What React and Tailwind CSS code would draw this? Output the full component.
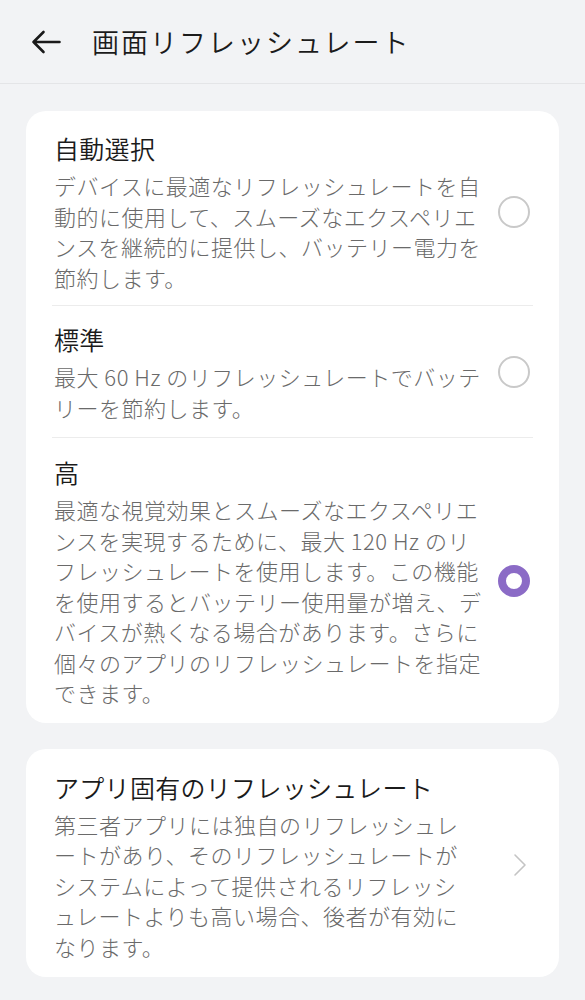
import React from 'react';

const options = [
  {
    title: '自動選択',
    lines: [
      'デバイスに最適なリフレッシュレートを自',
      '動的に使用して、スムーズなエクスペリエ',
      'ンスを継続的に提供し、バッテリー電力を',
      '節約します。',
    ],
    pad: 'pt-[20px] pb-[13px]',
    checked: false,
  },
  {
    title: '標準',
    lines: ['最大 60 Hz のリフレッシュレートでバッテ', 'リーを節約します。'],
    pad: 'pt-[16px] pb-[15px]',
    checked: false,
  },
  {
    title: '高',
    lines: [
      '最適な視覚効果とスムーズなエクスペリエ',
      'ンスを実現するために、最大 120 Hz のリ',
      'フレッシュレートを使用します。この機能',
      'を使用するとバッテリー使用量が増え、デ',
      'バイスが熱くなる場合があります。さらに',
      '個々のアプリのリフレッシュレートを指定',
      'できます。',
    ],
    pad: 'pt-[17px] pb-[15px]',
    checked: true,
  },
];

const appLines = [
  '第三者アプリには独自のリフレッシュレ',
  'ートがあり、そのリフレッシュレートが',
  'システムによって提供されるリフレッシ',
  'ュレートよりも高い場合、後者が有効に',
  'なります。',
];

const Radio = ({ checked }) =>
  checked ? (
    <div className="w-[32px] h-[32px] shrink-0 rounded-full border-[8.5px] border-[#8b6bc6] bg-white" />
  ) : (
    <div className="w-[32px] h-[32px] shrink-0 rounded-full border-[2.5px] border-[#c9c9c9] bg-white" />
  );

const Text = ({ title, lines }) => (
  <div className="flex-1 min-w-0">
    <div className="text-[25px] leading-[34px] tracking-[0.3px] font-[350] text-[#1b1b1b]">{title}</div>
    <div className="mt-[5px] text-[22px] leading-[30.5px] tracking-[0.5px] font-light text-[#6a6a6a]">
      {lines.map((l, i) => (
        <div key={i} className="whitespace-nowrap">
          {l}
        </div>
      ))}
    </div>
  </div>
);

export default function App() {
  return (
    <div className="min-h-[1000px] bg-[#f2f3f5] font-['Noto_Sans_CJK_JP','Noto_Sans',sans-serif]">
      {/* header */}
      <div className="h-[84px] flex items-center border-b border-[#e4e5e7]">
        <svg className="ml-[31px] shrink-0" width="30" height="26" viewBox="0 0 30 26" fill="none">
          <path d="M28.5 13H2.5M12.5 3l-10 10 10 10" stroke="#1a1a1a" strokeWidth="2.6" strokeLinecap="round" strokeLinejoin="round" />
        </svg>
        <div className="ml-[31px] text-[27px] tracking-[2px] font-[350] text-[#1b1b1b] leading-none">画面リフレッシュレート</div>
      </div>

      {/* options */}
      <div className="mx-[26px] mt-[27px] bg-white rounded-[20px]">
        {options.map((o, i) => (
          <div key={o.title}>
            {i > 0 && <div className="mx-[26px] h-px bg-[#ececec]" />}
            <div className={`flex items-center pl-[28px] pr-[29px] ${o.pad}`}>
              <Text title={o.title} lines={o.lines} />
              <Radio checked={o.checked} />
            </div>
          </div>
        ))}
      </div>

      {/* app specific */}
      <div className="mx-[26px] mt-[26px] bg-white rounded-[20px] flex items-center pl-[28px] pr-[32px] pt-[21px] pb-[16px]">
        <Text title="アプリ固有のリフレッシュレート" lines={appLines} />
        <svg width="14" height="24" viewBox="0 0 14 24" fill="none" className="shrink-0">
          <path d="M2 2l10 10L2 22" stroke="#c4c4c4" strokeWidth="1.6" strokeLinecap="round" strokeLinejoin="round" />
        </svg>
      </div>
    </div>
  );
}
